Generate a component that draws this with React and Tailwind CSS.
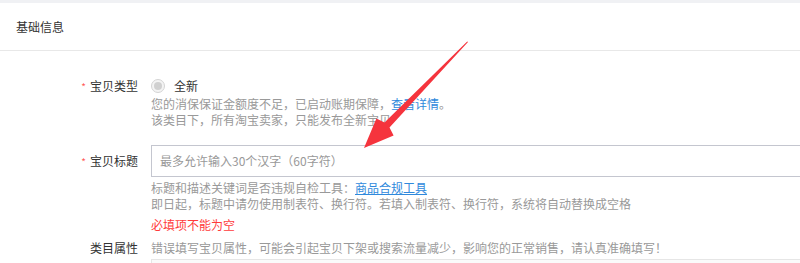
import React from "react";

const font = { fontFamily: '"Noto Sans CJK SC", "Noto Sans", sans-serif' };

const Label = ({ required, children }) => (
  <div className="w-[138px] shrink-0 text-right text-[12px] leading-5 text-[#333]">
    {required && <span className="mr-[4px] text-[10px] text-[#ff5b5b]">*</span>}
    {children}
  </div>
);

const Arrow = () => (
  <svg className="absolute left-0 top-0 pointer-events-none" width="800" height="263">
    <polygon
      fill="#f5343d"
      points="468,42 389.5,127.5 393.6,135.4 364,148 376.4,118.6 384.5,122.5 467.2,41.4"
    />
  </svg>
);

export default function App() {
  return (
    <div className="relative w-[800px] h-[263px] overflow-hidden bg-white" style={font}>
      <div className="h-[3px] bg-[#f0f1f4]" />
      <div className="h-[48px] flex items-center px-4 border-b border-[#e8e8e8] text-[12px] text-[#333]">
        基础信息
      </div>

      <div className="pt-[25px]">
        <div className="flex">
          <Label required>宝贝类型</Label>
          <div className="ml-[13px] text-[12px]">
            <div className="flex items-center h-5">
              <span className="w-[14px] h-[14px] rounded-full border border-[#d4d4d4] bg-[#f4f4f4] flex items-center justify-center">
                <span className="w-[8px] h-[8px] rounded-full bg-[#d0d0d0]" />
              </span>
              <span className="ml-[9px] text-[#333]">全新</span>
            </div>
            <div className="leading-4 text-[#999]">
              您的消保保证金额度不足，已启动账期保障，<span className="text-[#3089dc]">查看详情</span>。
            </div>
            <div className="leading-4 text-[#999]">该类目下，所有淘宝卖家，只能发布全新宝贝</div>
          </div>
        </div>

        <div className="flex mt-[17px]">
          <div className="h-[32px] flex items-center">
            <Label required>宝贝标题</Label>
          </div>
          <div className="ml-[13px] flex-1 text-[12px]">
            <div className="h-[32px] border border-[#c4c6cf] flex items-center px-[8px] text-[#999] -mr-4">
              最多允许输入30个汉字（60字符）
            </div>
            <div className="mt-[3px] leading-4 text-[#999]">
              标题和描述关键词是否违规自检工具：<span className="text-[#3089dc] underline">商品合规工具</span>
            </div>
            <div className="leading-4 text-[#999]">
              即日起，标题中请勿使用制表符、换行符。若填入制表符、换行符，系统将自动替换成空格
            </div>
            <div className="mt-[5px] leading-4 text-[#ff3b3b]">必填项不能为空</div>
          </div>
        </div>

        <div className="flex mt-[7px]">
          <div className="h-4 flex items-center">
            <Label>类目属性</Label>
          </div>
          <div className="ml-[13px] flex-1 text-[12px]">
            <div className="leading-4 text-[#999]">
              错误填写宝贝属性，可能会引起宝贝下架或搜索流量减少，影响您的正常销售，请认真准确填写！
            </div>
            <div className="mt-[3px] h-[20px] border border-[#e6e6e6] bg-[#fafafa] -mr-4" />
          </div>
        </div>
      </div>

      <Arrow />
    </div>
  );
}
